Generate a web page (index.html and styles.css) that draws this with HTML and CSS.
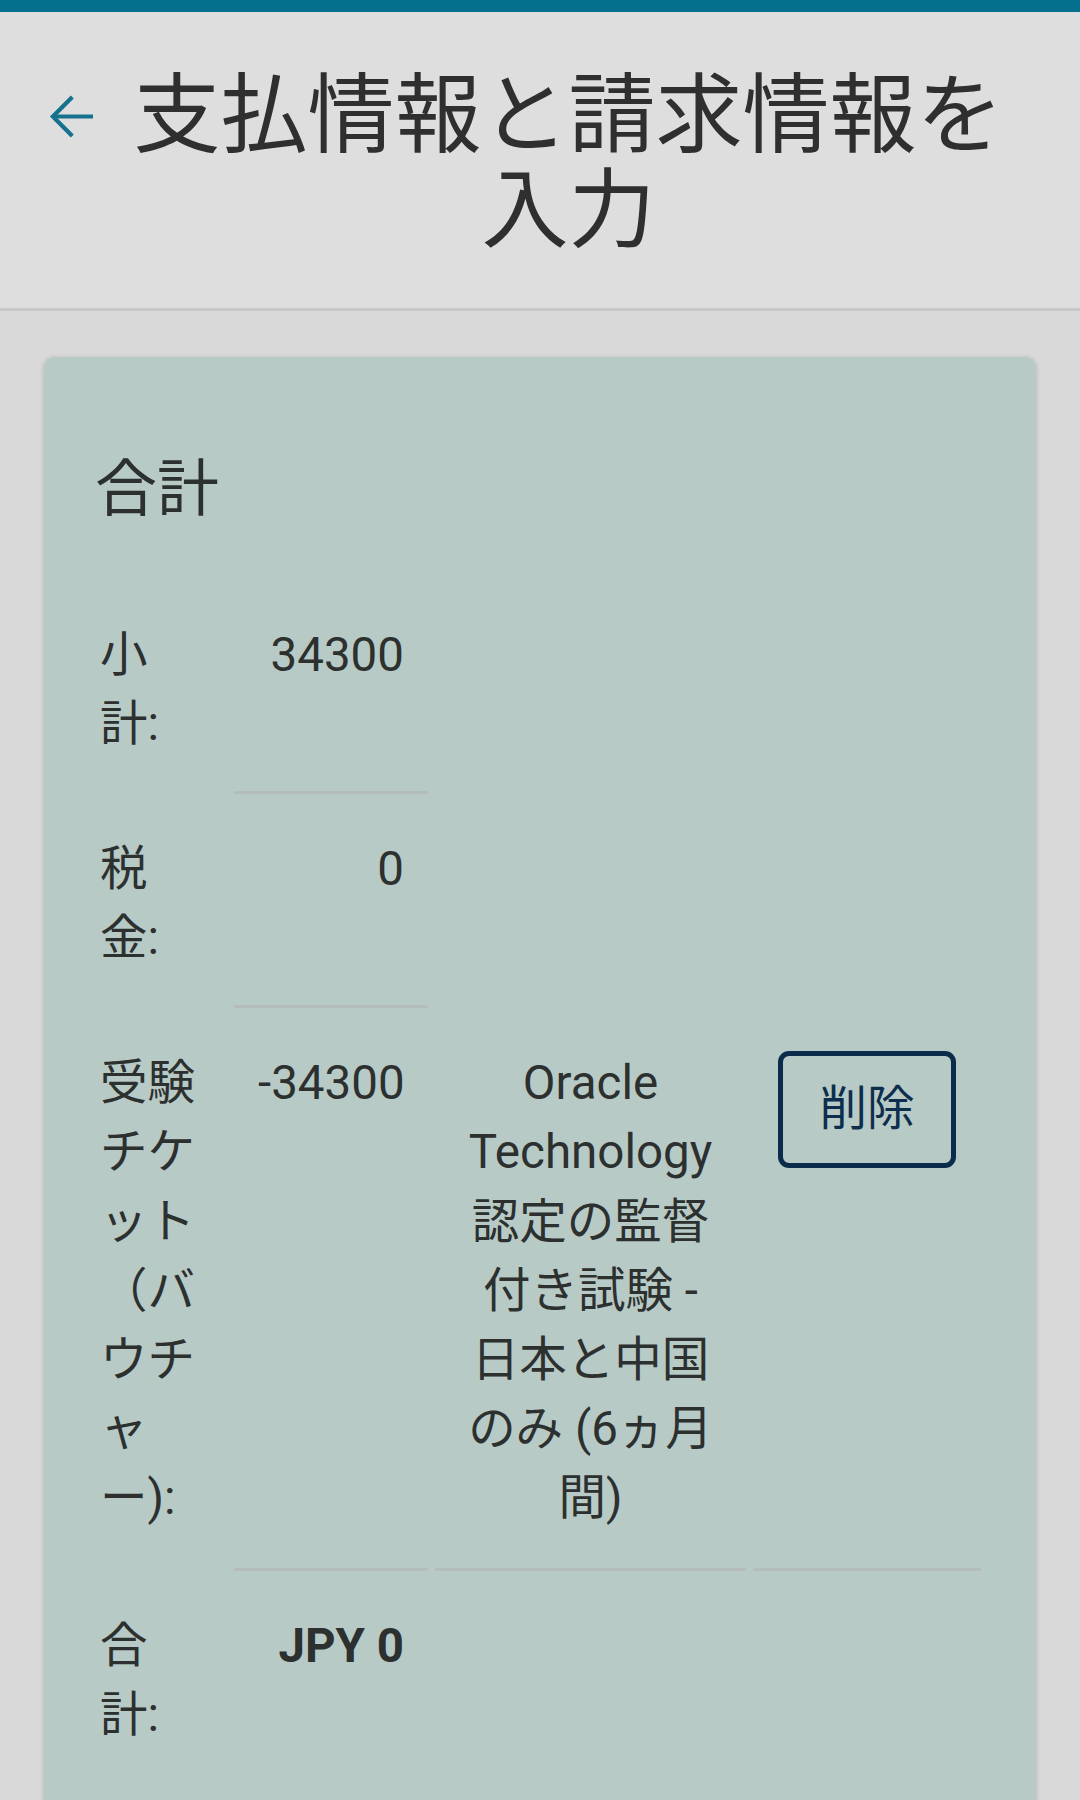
FILE: index.html
```html
<!DOCTYPE html>
<html lang="ja">
<head>
<meta charset="utf-8">
<title>支払情報と請求情報を入力</title>
<link rel="stylesheet" href="styles.css">
</head>
<body>
<div class="topbar"></div>
<header class="header">
  <button class="back" type="button" aria-label="戻る">
    <svg class="back-icon" viewBox="0 0 24 24" width="63" height="63" aria-hidden="true">
      <path d="M20.2 12H5.2" fill="none" stroke="currentColor" stroke-width="1.6"/>
      <path d="M12.3 4.6L4.9 12L12.3 19.4" fill="none" stroke="currentColor" stroke-width="1.6"/>
    </svg>
  </button>
  <h1 class="title">支払情報と請求情報を入力</h1>
</header>
<main class="page">
  <section class="card">
    <h2 class="card-title">合計</h2>
    <table class="summary">
      <colgroup>
        <col class="c-label">
        <col class="c-value">
        <col class="c-desc">
        <col class="c-action">
      </colgroup>
      <tbody>
        <tr>
          <th class="label">小計:</th>
          <td class="num">34300</td>
        </tr>
        <tr>
          <th class="label">税金:</th>
          <td class="num">0</td>
        </tr>
        <tr>
          <th class="label">受験チケット（バウチャー):</th>
          <td class="num">-34300</td>
          <td class="desc">Oracle Technology 認定の監督付き試験 - 日本と中国のみ (6ヵ月間)</td>
          <td class="action"><button class="remove" type="button">削除</button></td>
        </tr>
        <tr class="total">
          <th class="label">合計:</th>
          <td class="num strong">JPY 0</td>
        </tr>
      </tbody>
    </table>
  </section>
</main>
</body>
</html>
```
FILE: styles.css
```css
html, body {
  margin: 0;
  padding: 0;
}

body {
  background: #d9d9d9;
  font-family: Roboto, "Noto Sans CJK JP", sans-serif;
  color: #2c302f;
  overflow: hidden;
}

.topbar {
  height: 12px;
  background: #04708e;
}

.header {
  display: flex;
  align-items: flex-start;
  gap: 10px;
  padding: 57px 56px 49px 40px;
  background: #dedede;
  border-bottom: 3px solid #c8c8c8;
}

.back {
  flex: none;
  width: 63px;
  height: 63px;
  margin-top: 16px;
  padding: 0;
  border: 0;
  background: transparent;
  color: #16718c;
}

.back-icon {
  display: block;
}

.title {
  flex: 1;
  margin: 0;
  font-size: 87px;
  line-height: 95px;
  font-weight: 400;
  text-align: center;
  color: #2f2f2f;
}

.page {
  padding: 46px 44px 0;
}

.card {
  background: #b8cac6;
  border-radius: 10px;
  box-shadow: 0 1px 5px rgba(0, 0, 0, 0.18);
  padding: 96px 25px 400px;
}

.card-title {
  margin: 0 0 53px 26px;
  font-size: 62px;
  line-height: 74px;
  font-weight: 400;
}

.summary {
  table-layout: fixed;
  width: 919px;
  border-collapse: separate;
  border-spacing: 7px 0;
  font-size: 47.5px;
  line-height: 69.1px;
}

.c-label { width: 151px; }
.c-value { width: 194px; }
.c-desc { width: 311px; }
.c-action { width: 228px; }

.summary th,
.summary td {
  vertical-align: top;
  padding: 41px 24px 35px;
  font-weight: 400;
}

.summary td {
  border-bottom: 3px solid #b4bdbb;
}

.summary .label {
  text-align: left;
  padding-right: 27px;
  border-bottom: 0;
}

.num {
  text-align: right;
}

.desc {
  text-align: center;
}

.action {
  text-align: center;
}

.total td {
  border-bottom: 0;
}

.strong {
  font-weight: 700 !important;
}

.remove {
  display: block;
  width: 178px;
  height: 117px;
  margin: 2px auto 0;
  padding: 0;
  border: 5px solid #0b2c4a;
  border-radius: 11px;
  background: transparent;
  font-family: Roboto, "Noto Sans CJK JP", sans-serif;
  font-size: 47.5px;
  line-height: 1;
  color: #0d2e4c;
}
```
